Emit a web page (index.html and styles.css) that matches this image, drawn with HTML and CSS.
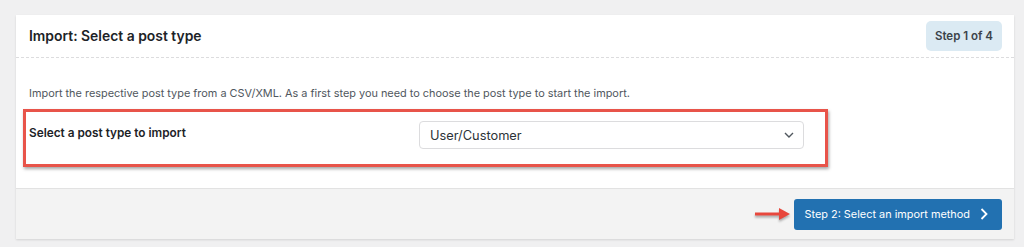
FILE: index.html
```html
<!DOCTYPE html>
<html lang="en">
<head>
    <meta charset="UTF-8">
    <title>Import: Select a post type</title>
    <link rel="stylesheet" href="styles.css">
</head>
<body>
    <div class="card">
        <div class="card-head">
            <h2>Import: Select a post type</h2>
            <span class="step">Step 1 of 4</span>
        </div>
        <div class="card-body">
            <p class="desc">Import the respective post type from a CSV/XML. As a first step you need to choose the post type to start the import.</p>
            <div class="field-row">
                <label for="post_type">Select a post type to import</label>
                <div class="select">
                    <span>User/Customer</span>
                    <svg width="10" height="6" viewBox="0 0 10 6"><path d="M1 1l4 4 4-4" fill="none" stroke="#50575e" stroke-width="1.4"/></svg>
                </div>
            </div>
        </div>
        <div class="card-foot">
            <svg class="arrow" width="38" height="14" viewBox="0 0 38 14">
                <path d="M1 7h27" stroke="#e8473c" stroke-width="3"/>
                <path d="M25 1l11 6-11 6z" fill="#e8473c"/>
            </svg>
            <button type="button">Step 2: Select an import method
                <svg width="8" height="12" viewBox="0 0 8 12"><path d="M1.5 1l5 5-5 5" fill="none" stroke="#fff" stroke-width="1.8"/></svg>
            </button>
        </div>
    </div>
</body>
</html>
```

FILE: styles.css
```css
body {
    margin: 0;
    padding: 15px 10px 8px 16px;
    background: #f0f0f1;
    font-family: Inter, 'Open Sans', sans-serif;
    color: #3c434a;
}
.card {
    width: 998px;
    background: #fff;
    box-shadow: 0 1px 2px rgba(0,0,0,0.12);
}
.card-head {
    height: 42px;
    display: flex;
    align-items: center;
    justify-content: space-between;
    padding: 0 12px 0 13px;
    border-bottom: 1px dashed #dcdcde;
}
.card-head h2 {
    margin: 0;
    font-size: 13.9px;
    font-weight: 600;
    color: #1d2327;
}
.step {
    background: #dbeaf3;
    border-radius: 5px;
    padding: 8px 9px;
    font-size: 11.5px;
    font-weight: 600;
    color: #3c434a;
}
.card-body {
    padding: 28px 10px 21px 7px;
}
.desc {
    margin: 0 0 9px 6px;
    font-size: 10.9px;
    color: #50575e;
}
.field-row {
    width: 799px;
    height: 52px;
    display: flex;
    border: 3px solid #e8544a;
    box-shadow: 1px 2px 3px rgba(0,0,0,0.35);
}
.field-row label {
    width: 390px;
    padding: 14px 0 0 3px;
    font-size: 11.8px;
    font-weight: 600;
    color: #1d2327;
}
.select {
    margin-top: 9px;
    width: 364px;
    height: 26px;
    display: flex;
    align-items: center;
    justify-content: space-between;
    padding: 0 9px 0 10px;
    border: 1px solid #dcdcde;
    border-radius: 4px;
    font-size: 12.8px;
    color: #2c3338;
}
.card-foot {
    height: 50px;
    display: flex;
    align-items: center;
    justify-content: flex-end;
    gap: 2px;
    padding: 0 12px;
    background: #f3f3f3;
    border-top: 1px solid #e2e2e2;
}
.arrow {
    filter: drop-shadow(0 2px 1px rgba(0,0,0,0.3));
}
button {
    height: 31px;
    display: flex;
    align-items: center;
    gap: 10px;
    padding: 0 14px 0 10px;
    background: #2271b1;
    color: #fff;
    border: none;
    border-radius: 3px;
    font-family: inherit;
    font-size: 10.9px;
}
```
